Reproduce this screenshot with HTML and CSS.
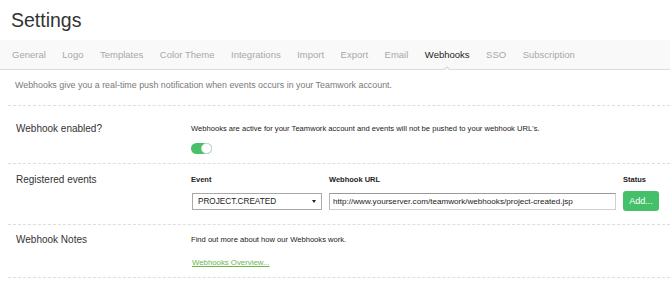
FILE: index.html
```html
<!DOCTYPE html>
<html lang="en">
<head>
    <meta charset="UTF-8">
    <meta name="viewport" content="width=device-width, initial-scale=1.0">
    <title>Settings - Webhooks</title>
    <link rel="stylesheet" href="styles.css">
</head>
<body>
    <h1 class="page-title">Settings</h1>

    <!-- Settings sections -->
    <nav class="tabs">
        <a class="tab" href="#">General</a>
        <a class="tab" href="#">Logo</a>
        <a class="tab" href="#">Templates</a>
        <a class="tab" href="#">Color Theme</a>
        <a class="tab" href="#">Integrations</a>
        <a class="tab" href="#">Import</a>
        <a class="tab" href="#">Export</a>
        <a class="tab" href="#">Email</a>
        <a class="tab active" href="#">Webhooks</a>
        <a class="tab" href="#">SSO</a>
        <a class="tab" href="#">Subscription</a>
    </nav>

    <div class="content">
        <p class="intro">Webhooks give you a real-time push notification when events occurs in your Teamwork account.</p>

        <div class="row row-enabled">
            <div class="row-label">Webhook enabled?</div>
            <div class="row-body">
                <div class="note">Webhooks are active for your Teamwork account and events will not be pushed to your webhook URL's.</div>
                <div class="toggle on"><span class="knob"></span></div>
            </div>
        </div>

        <div class="row row-events">
            <div class="row-label">Registered events</div>
            <div class="row-body events-grid">
                <div class="col-head">Event</div>
                <div class="col-head">Webhook URL</div>
                <div class="col-head">Status</div>

                <div class="select-wrap">
                    <select class="event-select">
                        <option>PROJECT.CREATED</option>
                    </select>
                </div>
                <input class="url-input" type="text" value="http://www.yourserver.com/teamwork/webhooks/project-created.jsp">
                <button class="add-btn">Add...</button>
            </div>
        </div>

        <div class="row row-notes">
            <div class="row-label">Webhook Notes</div>
            <div class="row-body">
                <div class="note">Find out more about how our Webhooks work.</div>
                <a class="doc-link" href="#">Webhooks Overview...</a>
            </div>
        </div>
    </div>
</body>
</html>
```

FILE: styles.css
```css
body {
    margin: 0;
    font-family: "Liberation Sans", Arial, sans-serif;
    background: #fff;
    color: #333;
    overflow: hidden;
}

.page-title {
    margin: 0;
    padding: 8px 11px 0;
    font-size: 19.5px;
    line-height: 24px;
    font-weight: normal;
    color: #333;
}

/* tab strip */
.tabs {
    display: flex;
    gap: 16.5px;
    align-items: center;
    height: 29px;
    margin-top: 8px;
    padding: 0 12px;
    background: #f9f9f9;
    border-bottom: 1px solid #dcdcdc;
}

.tab {
    position: relative;
    font-size: 9.5px;
    color: #a8a8a8;
    text-decoration: none;
    white-space: nowrap;
}

.tab.active {
    color: #222;
}

.tab.active::before,
.tab.active::after {
    content: "";
    position: absolute;
    left: 50%;
    width: 0;
    height: 0;
    border-style: solid;
    border-color: transparent;
}

.tab.active::before {
    bottom: -10px;
    margin-left: -4px;
    border-width: 0 4px 4px;
    border-bottom-color: #dcdcdc;
}

.tab.active::after {
    bottom: -11px;
    margin-left: -3px;
    border-width: 0 3px 3px;
    border-bottom-color: #fff;
}

/* page body */
.content {
    margin-left: 8px;
}

.intro {
    margin: 9px 0 0;
    padding: 0 0 14px 7px;
    font-size: 8.9px;
    line-height: 12px;
    color: #7a7a7a;
    border-bottom: 1px dashed #dedede;
}

.row {
    display: grid;
    grid-template-columns: 183px 1fr;
    border-bottom: 1px dashed #dedede;
}

.row-label {
    padding-left: 8px;
    font-size: 10px;
    line-height: 14px;
    color: #333;
}

.note {
    font-size: 7.6px;
    line-height: 14px;
    color: #222;
}

.row-enabled {
    padding: 16px 0 9px;
}

.row-events {
    padding: 9px 0 13px;
}

.row-notes {
    padding: 8px 0 7px;
}

/* toggle switch */
.toggle {
    display: flex;
    align-items: center;
    justify-content: flex-end;
    width: 21px;
    height: 11px;
    margin-top: 7px;
    border-radius: 6px;
    background: #48c168;
}

.knob {
    width: 9px;
    height: 9px;
    border-radius: 50%;
    background: #fff;
    border: 1px solid #d8d8d8;
}

/* event table */
.events-grid {
    display: grid;
    grid-template-columns: 131px 287px 36px;
    column-gap: 7px;
    row-gap: 4px;
    align-items: center;
}

.col-head {
    font-size: 7.5px;
    line-height: 14px;
    font-weight: bold;
    color: #222;
}

.select-wrap {
    position: relative;
    margin-left: 1px;
}

.select-wrap::after {
    content: "";
    position: absolute;
    right: 6px;
    top: 7px;
    border-style: solid;
    border-width: 3px 2px 0;
    border-color: #222 transparent transparent;
}

.event-select {
    appearance: none;
    -webkit-appearance: none;
    display: block;
    width: 130px;
    height: 17px;
    padding: 0 0 0 5px;
    margin: 0;
    border: 1px solid #a9a9a9;
    border-radius: 0;
    background: #fff;
    font-family: "Liberation Sans", Arial, sans-serif;
    font-size: 8.2px;
    color: #222;
}

.url-input {
    box-sizing: border-box;
    width: 287px;
    height: 17px;
    padding: 0 3px;
    margin: 0;
    border: 1px solid #d0d0d0;
    border-top-color: #9a9a9a;
    border-left-color: #b5b5b5;
    font-family: "Liberation Sans", Arial, sans-serif;
    font-size: 8.1px;
    color: #222;
}

.add-btn {
    width: 36px;
    height: 20px;
    padding: 0;
    border: none;
    border-radius: 3px;
    background: #45c06a;
    color: #fff;
    font-family: "Liberation Sans", Arial, sans-serif;
    font-size: 9px;
    cursor: pointer;
}

.doc-link {
    display: inline-block;
    margin-top: 9px;
    margin-left: 1px;
    font-size: 7.8px;
    line-height: 14px;
    color: #6cb64c;
}
```
